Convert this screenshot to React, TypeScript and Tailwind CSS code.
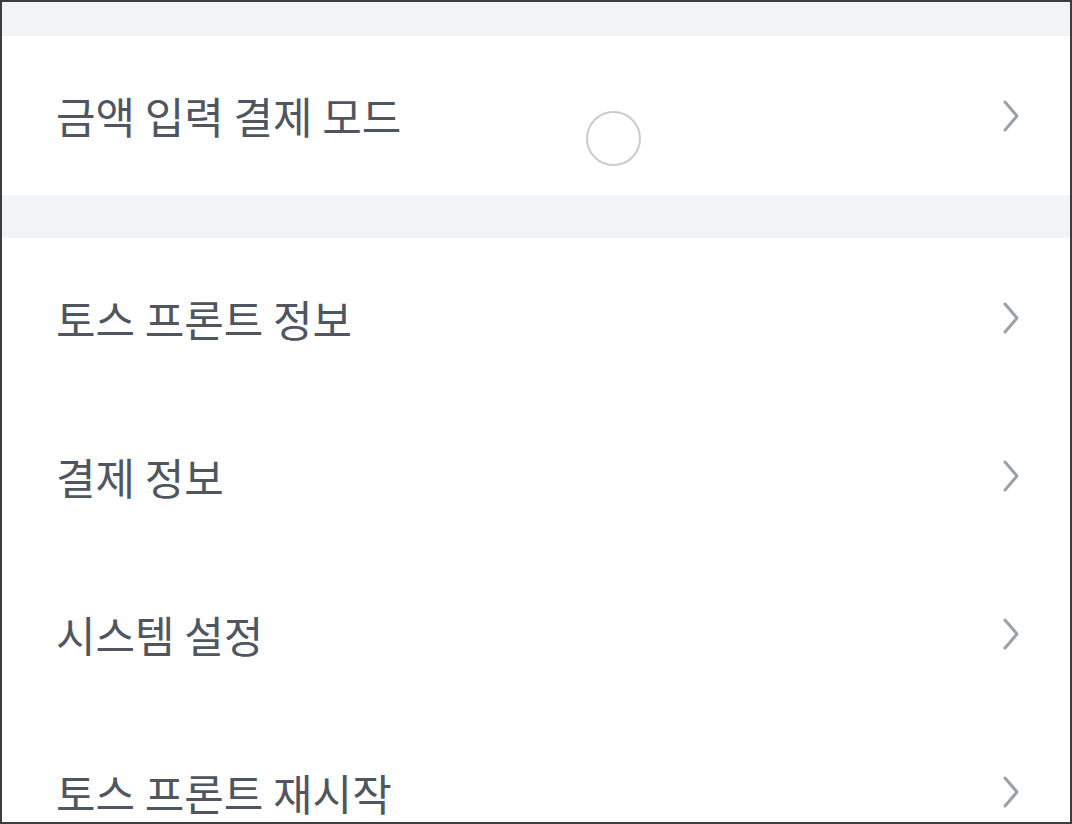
import React from "react";

const Chevron = () => (
  <svg width="20" height="34" viewBox="0 0 20 34" fill="none" className="shrink-0">
    <path d="M5 3 L17 17 L5 31" stroke="#9ba1a9" strokeWidth="3" strokeLinecap="round" strokeLinejoin="round" />
  </svg>
);

const Row = ({ label }: { label: string }) => (
  <div className="relative flex h-[158px] items-center justify-between bg-white pl-[54px] pr-[50px] pt-[2px]">
    <span className="text-[43px] leading-none text-[#4f5660]">{label}</span>
    <Chevron />
  </div>
);

export default function App() {
  return (
    <div
      className="box-border h-[824px] w-[1072px] overflow-hidden border-2 border-[#3d3d3d] bg-[#f2f3f5]"
      style={{ fontFamily: '"Noto Sans CJK KR", "Noto Sans", sans-serif' }}
    >
      <div className="h-[34px] bg-[#f2f3f5]" />
      <div className="relative flex h-[159px] items-center justify-between bg-white pl-[54px] pr-[50px]">
        <span className="text-[43px] leading-none text-[#4f5660]">금액 입력 결제 모드</span>
        <div className="absolute left-[584px] top-[75px] h-[55px] w-[55px] rounded-full border-2 border-[#c8ccd1]" />
        <Chevron />
      </div>
      <div className="h-[43px] bg-[#f2f3f5]" />
      <Row label="토스 프론트 정보" />
      <Row label="결제 정보" />
      <Row label="시스템 설정" />
      <Row label="토스 프론트 재시작" />
    </div>
  );
}
